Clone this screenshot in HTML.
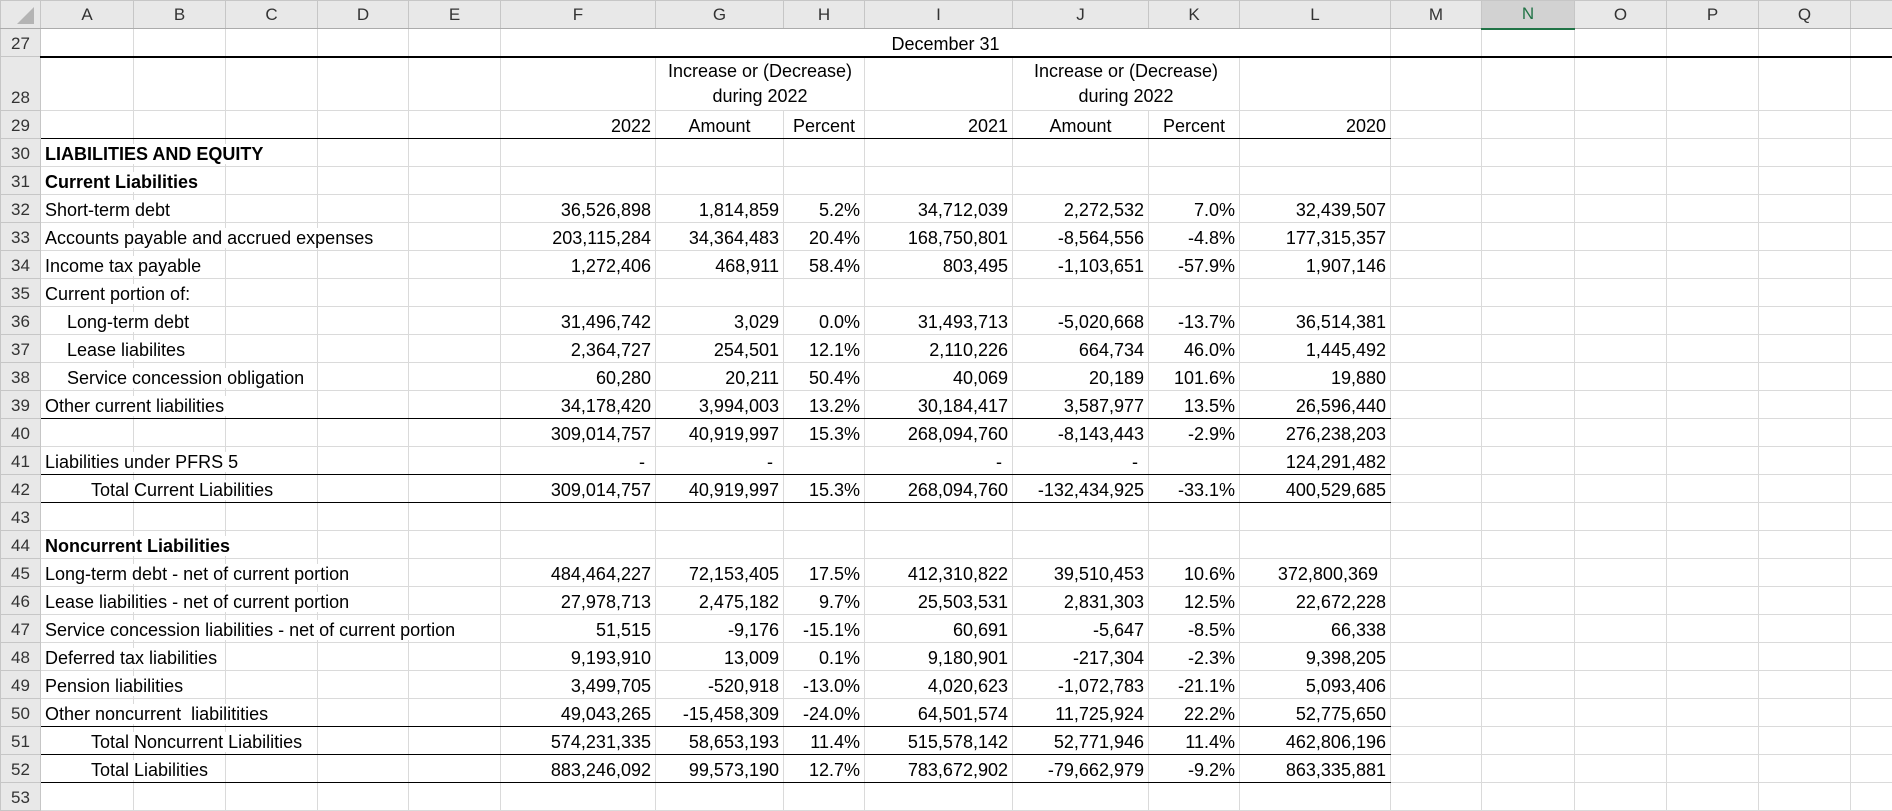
<!DOCTYPE html>
<html><head><meta charset="utf-8"><style>
body{margin:0;width:1892px;height:787px;overflow:hidden;background:#fff;font-family:"Liberation Sans",Arial,sans-serif;}
table{border-collapse:collapse;table-layout:fixed;width:1892px;font-size:18px;color:#000;}
td{border:1px solid #dadada;padding:0 4px 1px 4px;white-space:nowrap;overflow:visible;vertical-align:bottom;height:26px;line-height:22px;text-align:right;box-sizing:border-box;}
th{background:#e8e8e8;border:1px solid #c6c6c6;font-weight:normal;color:#333;font-size:17px;padding:0;box-sizing:border-box;}
thead th{height:28px;border-bottom:1px solid #ababab;text-align:center;vertical-align:middle;}
tbody th{text-align:center;vertical-align:bottom;padding-bottom:1px;line-height:22px;height:28px;}
tbody tr{height:28px;}
th.sel{background:#d2d2d2;color:#217346;border-bottom:2px solid #217346;}
td.l{text-align:left;position:relative;z-index:2;}
td.l span{background:#fff;padding-right:2px;}
td.i1{padding-left:26px}
td.i2{padding-left:50px}
td.b{font-weight:bold}
td.c{text-align:center}
tr.bb td:nth-child(-n+13){border-bottom:1px solid #000;}
tr.tk td:nth-child(-n+13){border-bottom:2px solid #000;}
tbody tr.h2{height:54px;}
tr.h2 td,tr.h2 th{height:54px;}
tr.h2 td.c{line-height:25px;padding-bottom:1px;}
.d{padding-right:10px}
</style></head><body>
<table>
<colgroup><col style="width:40px"><col style="width:93px"><col style="width:92px"><col style="width:92px"><col style="width:91px"><col style="width:92px"><col style="width:155px"><col style="width:128px"><col style="width:81px"><col style="width:148px"><col style="width:136px"><col style="width:91px"><col style="width:151px"><col style="width:91px"><col style="width:93px"><col style="width:92px"><col style="width:92px"><col style="width:92px"><col style="width:42px"></colgroup>
<thead><tr><th style="position:relative"><svg width="38" height="26" style="position:absolute;left:0;top:0"><polygon points="33,6 33,23 16,23" fill="#b4b4b4"/></svg></th><th>A</th><th>B</th><th>C</th><th>D</th><th>E</th><th>F</th><th>G</th><th>H</th><th>I</th><th>J</th><th>K</th><th>L</th><th>M</th><th class="sel">N</th><th>O</th><th>P</th><th>Q</th><th></th></tr></thead>
<tbody>
<tr class="tk"><th>27</th><td></td><td></td><td></td><td></td><td></td><td colspan="7" class="c">December 31</td><td></td><td></td><td></td><td></td><td></td><td></td></tr>
<tr class="h2"><th>28</th><td></td><td></td><td></td><td></td><td></td><td></td><td colspan="2" class="c">Increase or (Decrease)<br>during 2022</td><td></td><td colspan="2" class="c">Increase or (Decrease)<br>during 2022</td><td></td><td></td><td></td><td></td><td></td><td></td><td></td></tr>
<tr class="bb"><th>29</th><td></td><td></td><td></td><td></td><td></td><td>2022</td><td class="c">Amount</td><td class="c">Percent</td><td>2021</td><td class="c">Amount</td><td class="c">Percent</td><td>2020</td><td></td><td></td><td></td><td></td><td></td><td></td></tr>
<tr><th>30</th><td class="l b"><span>LIABILITIES AND EQUITY</span></td><td></td><td></td><td></td><td></td><td></td><td></td><td></td><td></td><td></td><td></td><td></td><td></td><td></td><td></td><td></td><td></td><td></td></tr>
<tr><th>31</th><td class="l b"><span>Current Liabilities</span></td><td></td><td></td><td></td><td></td><td></td><td></td><td></td><td></td><td></td><td></td><td></td><td></td><td></td><td></td><td></td><td></td><td></td></tr>
<tr><th>32</th><td class="l"><span>Short-term debt</span></td><td></td><td></td><td></td><td></td><td>36,526,898</td><td>1,814,859</td><td>5.2%</td><td>34,712,039</td><td>2,272,532</td><td>7.0%</td><td>32,439,507</td><td></td><td></td><td></td><td></td><td></td><td></td></tr>
<tr><th>33</th><td class="l"><span>Accounts payable and accrued expenses</span></td><td></td><td></td><td></td><td></td><td>203,115,284</td><td>34,364,483</td><td>20.4%</td><td>168,750,801</td><td>-8,564,556</td><td>-4.8%</td><td>177,315,357</td><td></td><td></td><td></td><td></td><td></td><td></td></tr>
<tr><th>34</th><td class="l"><span>Income tax payable</span></td><td></td><td></td><td></td><td></td><td>1,272,406</td><td>468,911</td><td>58.4%</td><td>803,495</td><td>-1,103,651</td><td>-57.9%</td><td>1,907,146</td><td></td><td></td><td></td><td></td><td></td><td></td></tr>
<tr><th>35</th><td class="l"><span>Current portion of:</span></td><td></td><td></td><td></td><td></td><td></td><td></td><td></td><td></td><td></td><td></td><td></td><td></td><td></td><td></td><td></td><td></td><td></td></tr>
<tr><th>36</th><td class="l i1"><span>Long-term debt</span></td><td></td><td></td><td></td><td></td><td>31,496,742</td><td>3,029</td><td>0.0%</td><td>31,493,713</td><td>-5,020,668</td><td>-13.7%</td><td>36,514,381</td><td></td><td></td><td></td><td></td><td></td><td></td></tr>
<tr><th>37</th><td class="l i1"><span>Lease liabilites</span></td><td></td><td></td><td></td><td></td><td>2,364,727</td><td>254,501</td><td>12.1%</td><td>2,110,226</td><td>664,734</td><td>46.0%</td><td>1,445,492</td><td></td><td></td><td></td><td></td><td></td><td></td></tr>
<tr><th>38</th><td class="l i1"><span>Service concession obligation</span></td><td></td><td></td><td></td><td></td><td>60,280</td><td>20,211</td><td>50.4%</td><td>40,069</td><td>20,189</td><td>101.6%</td><td>19,880</td><td></td><td></td><td></td><td></td><td></td><td></td></tr>
<tr class="bb"><th>39</th><td class="l"><span>Other current liabilities</span></td><td></td><td></td><td></td><td></td><td>34,178,420</td><td>3,994,003</td><td>13.2%</td><td>30,184,417</td><td>3,587,977</td><td>13.5%</td><td>26,596,440</td><td></td><td></td><td></td><td></td><td></td><td></td></tr>
<tr><th>40</th><td></td><td></td><td></td><td></td><td></td><td>309,014,757</td><td>40,919,997</td><td>15.3%</td><td>268,094,760</td><td>-8,143,443</td><td>-2.9%</td><td>276,238,203</td><td></td><td></td><td></td><td></td><td></td><td></td></tr>
<tr class="bb"><th>41</th><td class="l"><span>Liabilities under PFRS 5</span></td><td></td><td></td><td></td><td></td><td class="d">-</td><td class="d">-</td><td></td><td class="d">-</td><td class="d">-</td><td></td><td>124,291,482</td><td></td><td></td><td></td><td></td><td></td><td></td></tr>
<tr class="bb"><th>42</th><td class="l i2"><span>Total Current Liabilities</span></td><td></td><td></td><td></td><td></td><td>309,014,757</td><td>40,919,997</td><td>15.3%</td><td>268,094,760</td><td>-132,434,925</td><td>-33.1%</td><td>400,529,685</td><td></td><td></td><td></td><td></td><td></td><td></td></tr>
<tr><th>43</th><td></td><td></td><td></td><td></td><td></td><td></td><td></td><td></td><td></td><td></td><td></td><td></td><td></td><td></td><td></td><td></td><td></td><td></td></tr>
<tr><th>44</th><td class="l b"><span>Noncurrent Liabilities</span></td><td></td><td></td><td></td><td></td><td></td><td></td><td></td><td></td><td></td><td></td><td></td><td></td><td></td><td></td><td></td><td></td><td></td></tr>
<tr><th>45</th><td class="l"><span>Long-term debt - net of current portion</span></td><td></td><td></td><td></td><td></td><td>484,464,227</td><td>72,153,405</td><td>17.5%</td><td>412,310,822</td><td>39,510,453</td><td>10.6%</td><td style="padding-right:12px">372,800,369</td><td></td><td></td><td></td><td></td><td></td><td></td></tr>
<tr><th>46</th><td class="l"><span>Lease liabilities - net of current portion</span></td><td></td><td></td><td></td><td></td><td>27,978,713</td><td>2,475,182</td><td>9.7%</td><td>25,503,531</td><td>2,831,303</td><td>12.5%</td><td>22,672,228</td><td></td><td></td><td></td><td></td><td></td><td></td></tr>
<tr><th>47</th><td class="l"><span>Service concession liabilities - net of current portion</span></td><td></td><td></td><td></td><td></td><td>51,515</td><td>-9,176</td><td>-15.1%</td><td>60,691</td><td>-5,647</td><td>-8.5%</td><td>66,338</td><td></td><td></td><td></td><td></td><td></td><td></td></tr>
<tr><th>48</th><td class="l"><span>Deferred tax liabilities</span></td><td></td><td></td><td></td><td></td><td>9,193,910</td><td>13,009</td><td>0.1%</td><td>9,180,901</td><td>-217,304</td><td>-2.3%</td><td>9,398,205</td><td></td><td></td><td></td><td></td><td></td><td></td></tr>
<tr><th>49</th><td class="l"><span>Pension liabilities</span></td><td></td><td></td><td></td><td></td><td>3,499,705</td><td>-520,918</td><td>-13.0%</td><td>4,020,623</td><td>-1,072,783</td><td>-21.1%</td><td>5,093,406</td><td></td><td></td><td></td><td></td><td></td><td></td></tr>
<tr class="bb"><th>50</th><td class="l"><span>Other noncurrent&nbsp; liabilitities</span></td><td></td><td></td><td></td><td></td><td>49,043,265</td><td>-15,458,309</td><td>-24.0%</td><td>64,501,574</td><td>11,725,924</td><td>22.2%</td><td>52,775,650</td><td></td><td></td><td></td><td></td><td></td><td></td></tr>
<tr class="bb"><th>51</th><td class="l i2"><span>Total Noncurrent Liabilities</span></td><td></td><td></td><td></td><td></td><td>574,231,335</td><td>58,653,193</td><td>11.4%</td><td>515,578,142</td><td>52,771,946</td><td>11.4%</td><td>462,806,196</td><td></td><td></td><td></td><td></td><td></td><td></td></tr>
<tr class="bb"><th>52</th><td class="l i2"><span>Total Liabilities</span></td><td></td><td></td><td></td><td></td><td>883,246,092</td><td>99,573,190</td><td>12.7%</td><td>783,672,902</td><td>-79,662,979</td><td>-9.2%</td><td>863,335,881</td><td></td><td></td><td></td><td></td><td></td><td></td></tr>
<tr><th>53</th><td></td><td></td><td></td><td></td><td></td><td></td><td></td><td></td><td></td><td></td><td></td><td></td><td></td><td></td><td></td><td></td><td></td><td></td></tr>
</tbody></table>
</body></html>
